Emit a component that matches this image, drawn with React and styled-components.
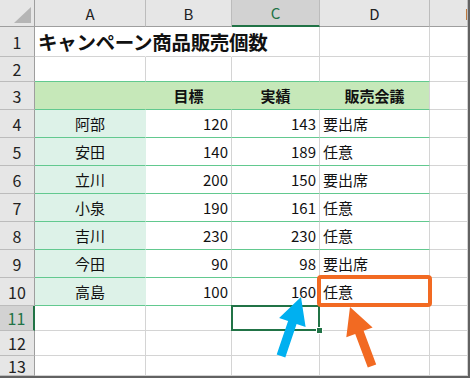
import styled, { createGlobalStyle } from "styled-components";

const GRID = "#d4d4d4";
const HEAD_LINE = "#bcbcbc";
const TABLE_LINE = "#62c98f";
const XL_GREEN = "#217346";
const HEAD_FILL = "#c6e8b9";
const NAME_FILL = "#ddf2e8";

const colWidths = [35, 111, 86, 88, 110, 38];
const rowHeights = [27, 30, 25, 28, 28, 28, 28, 28, 28, 28, 28, 25, 25, 20];

const sales = [
  ["阿部", 120, 143, "要出席"],
  ["安田", 140, 189, "任意"],
  ["立川", 200, 150, "要出席"],
  ["小泉", 190, 161, "任意"],
  ["吉川", 230, 230, "任意"],
  ["今田", 90, 98, "要出席"],
  ["高島", 100, 160, "任意"],
];

const GlobalStyle = createGlobalStyle`
  html, body {
    margin: 0;
    padding: 0;
    background: #fff;
  }
  body {
    font-family: "Noto Sans CJK JP", "Noto Sans", sans-serif;
    color: #111;
  }
`;

const Sheet = styled.div`
  position: relative;
  width: 470px;
  height: 378px;
  box-sizing: border-box;
  border-right: 2px solid #626262;
  border-bottom: 2px solid #626262;
  display: grid;
  grid-template-columns: ${colWidths.map((w) => `${w}px`).join(" ")};
  grid-template-rows: ${rowHeights.map((h) => `${h}px`).join(" ")};
  overflow: hidden;
`;

const Corner = styled.div`
  position: relative;
  background: #e6e6e6;
  border-right: 1px solid #9e9e9e;
  border-bottom: 1px solid #9e9e9e;
  &::after {
    content: "";
    position: absolute;
    right: 3px;
    bottom: 3px;
    width: 17px;
    height: 16px;
    background: #b5b5b5;
    clip-path: polygon(100% 0, 100% 100%, 0 100%);
  }
`;

const ColHead = styled.div`
  display: flex;
  align-items: center;
  justify-content: ${(p) => (p.$clip ? "flex-start" : "center")};
  padding-left: ${(p) => (p.$clip ? "35px" : "0")};
  white-space: nowrap;
  overflow: hidden;
  background: ${(p) => (p.$active ? "#d2d2d2" : "#e6e6e6")};
  border-right: 1px solid ${HEAD_LINE};
  border-bottom: ${(p) => (p.$active ? `2px solid ${XL_GREEN}` : "1px solid #9e9e9e")};
  font-size: 15px;
  color: ${(p) => (p.$active ? XL_GREEN : "#222")};
`;

const RowHead = styled.div`
  display: flex;
  align-items: center;
  justify-content: center;
  background: ${(p) => (p.$active ? "#d2d2d2" : "#e6e6e6")};
  border-right: ${(p) => (p.$active ? `2px solid ${XL_GREEN}` : "1px solid #9e9e9e")};
  border-bottom: 1px solid ${HEAD_LINE};
  font-size: 16px;
  color: ${(p) => (p.$active ? XL_GREEN : "#222")};
`;

const Cell = styled.div`
  position: relative;
  display: flex;
  align-items: center;
  justify-content: ${(p) => p.$align || "flex-start"};
  padding: 0 3px 1px;
  white-space: nowrap;
  background: ${(p) => p.$fill || "#fff"};
  border-right: 1px solid ${(p) => p.$vline || GRID};
  border-bottom: 1px solid ${(p) => p.$line || GRID};
  font-size: 15px;
  font-weight: ${(p) => (p.$bold ? 700 : 400)};
  color: #111;
`;

const Title = styled.span`
  position: relative;
  z-index: 1;
  font-size: 19.5px;
  font-weight: 700;
  letter-spacing: -0.3px;
`;

// active cell frame with its fill handle
const Selected = styled(Cell)`
  &::after {
    content: "";
    position: absolute;
    inset: -1px -1px -1px -1px;
    border: 2px solid ${XL_GREEN};
  }
  &::before {
    content: "";
    position: absolute;
    right: -3px;
    bottom: -3px;
    width: 5px;
    height: 5px;
    background: ${XL_GREEN};
    outline: 1px solid #fff;
    z-index: 2;
  }
`;

const Callouts = styled.svg`
  position: absolute;
  left: 0;
  top: 0;
  width: 470px;
  height: 378px;
  pointer-events: none;
  z-index: 3;
`;

function arrowPoints(tail, tip, headLen = 27, headHalf = 14, shaftHalf = 4.5) {
  const dx = tip[0] - tail[0];
  const dy = tip[1] - tail[1];
  const len = Math.hypot(dx, dy);
  const ux = dx / len;
  const uy = dy / len;
  const nx = -uy;
  const ny = ux;
  const bx = tip[0] - ux * headLen;
  const by = tip[1] - uy * headLen;
  const pts = [
    tip,
    [bx + nx * headHalf, by + ny * headHalf],
    [bx + nx * shaftHalf, by + ny * shaftHalf],
    [tail[0] + nx * shaftHalf, tail[1] + ny * shaftHalf],
    [tail[0] - nx * shaftHalf, tail[1] - ny * shaftHalf],
    [bx - nx * shaftHalf, by - ny * shaftHalf],
    [bx - nx * headHalf, by - ny * headHalf],
  ];
  return pts.map((p) => p.map((v) => v.toFixed(1)).join(",")).join(" ");
}

function PlainRow({ n, active }) {
  return (
    <>
      <RowHead $active={active}>{n}</RowHead>
      <Cell />
      <Cell />
      {active ? <Selected /> : <Cell />}
      <Cell />
      <Cell />
    </>
  );
}

export default function App() {
  return (
    <>
      <GlobalStyle />
      <Sheet>
        <Corner />
        <ColHead>A</ColHead>
        <ColHead>B</ColHead>
        <ColHead $active>C</ColHead>
        <ColHead>D</ColHead>
        <ColHead $clip>E</ColHead>

        <RowHead>1</RowHead>
        <Cell $vline="#fff" style={{ overflow: "visible" }}>
          <Title>キャンペーン商品販売個数</Title>
        </Cell>
        <Cell $vline="#fff" />
        <Cell />
        <Cell />
        <Cell />

        <RowHead>2</RowHead>
        <Cell $line={TABLE_LINE} />
        <Cell $line={TABLE_LINE} />
        <Cell $line={TABLE_LINE} />
        <Cell $line={TABLE_LINE} />
        <Cell />

        <RowHead>3</RowHead>
        <Cell $fill={HEAD_FILL} $vline={HEAD_FILL} $line={TABLE_LINE} />
        <Cell $fill={HEAD_FILL} $vline={HEAD_FILL} $line={TABLE_LINE} $align="center" $bold>
          目標
        </Cell>
        <Cell $fill={HEAD_FILL} $vline={HEAD_FILL} $line={TABLE_LINE} $align="center" $bold>
          実績
        </Cell>
        <Cell $fill={HEAD_FILL} $line={TABLE_LINE} $align="center" $bold>
          販売会議
        </Cell>
        <Cell />

        {sales.map(([name, target, result, meeting], i) => (
          <Row key={name} n={i + 4} name={name} target={target} result={result} meeting={meeting} />
        ))}

        <PlainRow n={11} active />
        <PlainRow n={12} />
        <PlainRow n={13} />

        <Callouts viewBox="0 0 470 378">
          <rect x="319" y="277" width="111" height="28" rx="2" fill="none" stroke="#f26a22" strokeWidth="4" />
          <polygon points={arrowPoints([281, 356], [301, 297])} fill="#00b0f0" />
          <polygon points={arrowPoints([372, 366], [350, 307])} fill="#f26a22" />
        </Callouts>
      </Sheet>
    </>
  );
}

function Row({ n, name, target, result, meeting }) {
  return (
    <>
      <RowHead>{n}</RowHead>
      <Cell $fill={NAME_FILL} $vline={NAME_FILL} $line={TABLE_LINE} $align="center">
        {name}
      </Cell>
      <Cell $line={TABLE_LINE} $align="flex-end">
        {target}
      </Cell>
      <Cell $line={TABLE_LINE} $align="flex-end">
        {result}
      </Cell>
      <Cell $line={TABLE_LINE}>{meeting}</Cell>
      <Cell />
    </>
  );
}
